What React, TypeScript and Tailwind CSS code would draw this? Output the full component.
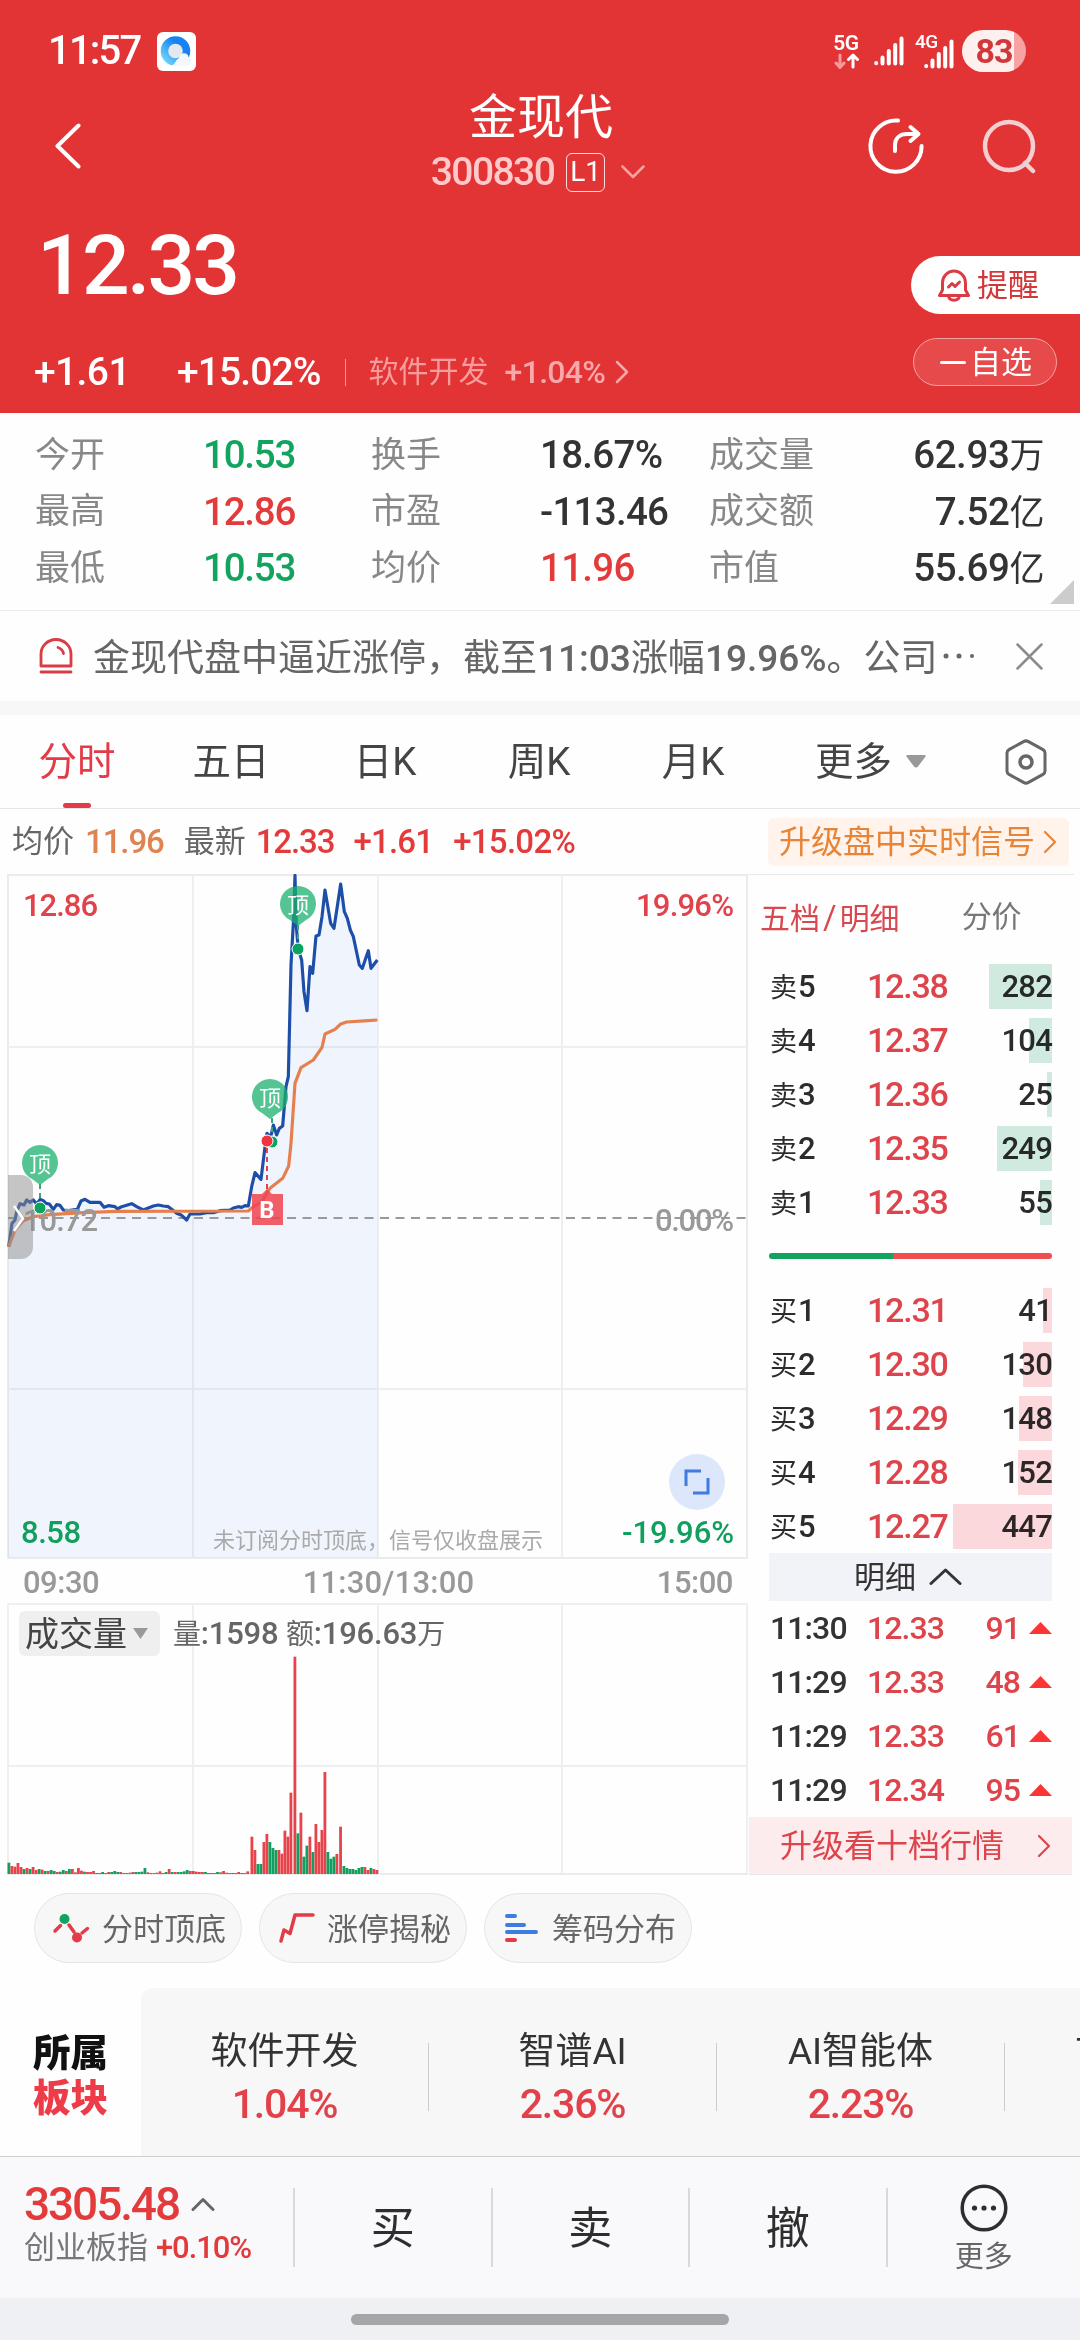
import type { ReactNode } from "react";

type Side = "up" | "down";

const stats = [
  [
    { label: "今开", value: "10.53", color: "text-[#12a35f]" },
    { label: "换手", value: "18.67%", color: "text-[#333]" },
    { label: "成交量", value: "62.93万", color: "text-[#333]" },
  ],
  [
    { label: "最高", value: "12.86", color: "text-[#e33b3b]" },
    { label: "市盈", value: "-113.46", color: "text-[#333]" },
    { label: "成交额", value: "7.52亿", color: "text-[#333]" },
  ],
  [
    { label: "最低", value: "10.53", color: "text-[#12a35f]" },
    { label: "均价", value: "11.96", color: "text-[#e33b3b]" },
    { label: "市值", value: "55.69亿", color: "text-[#333]" },
  ],
];

const sells = [
  { label: "卖5", price: "12.38", volume: 282, width: 63 },
  { label: "卖4", price: "12.37", volume: 104, width: 23 },
  { label: "卖3", price: "12.36", volume: 25, width: 5 },
  { label: "卖2", price: "12.35", volume: 249, width: 55 },
  { label: "卖1", price: "12.33", volume: 55, width: 12 },
];

const buys = [
  { label: "买1", price: "12.31", volume: 41, width: 9 },
  { label: "买2", price: "12.30", volume: 130, width: 29 },
  { label: "买3", price: "12.29", volume: 148, width: 33 },
  { label: "买4", price: "12.28", volume: 152, width: 34 },
  { label: "买5", price: "12.27", volume: 447, width: 99 },
];

const ticks = [
  { time: "11:30", price: "12.33", volume: 91 },
  { time: "11:29", price: "12.33", volume: 48 },
  { time: "11:29", price: "12.33", volume: 61 },
  { time: "11:29", price: "12.34", volume: 95 },
];

const sectors = [
  { name: "软件开发", change: "1.04%" },
  { name: "智谱AI", change: "2.36%" },
  { name: "AI智能体", change: "2.23%" },
];

// Chart series are kept at three units per pixel
const pricePoints =
  "26,1340 36,1270 45,1260 50,1235 60,1211 72,1215 80,1200 90,1207 100,1200 110,1212 121,1198 130,1202 138,1210 148,1212 160,1228 170,1214 180,1216 190,1230 205,1232 232,1228 243,1203 255,1198 270,1207 300,1207 312,1222 325,1217 345,1220 352,1227 365,1220 380,1216 395,1211 410,1220 430,1230 445,1224 460,1218 475,1215 490,1218 505,1220 515,1228 530,1240 545,1246 560,1260 570,1242 600,1242 620,1238 640,1238 660,1232 690,1230 700,1224 715,1220 725,1222 735,1217 745,1218 755,1160 765,1118 783,1138 795,1040 801,1000 812,1012 820,975 830,1005 838,985 848,978 858,860 865,830 873,495 880,370 885,226 889,380 895,448 905,480 912,575 921,632 930,500 938,520 948,408 957,405 966,350 975,270 992,370 1002,385 1022,252 1033,335 1042,355 1051,390 1060,410 1078,495 1087,505 1105,452 1113,505 1132,480";

const averagePoints =
  "26,1340 45,1290 70,1262 100,1250 150,1244 250,1238 350,1234 745,1233 765,1216 783,1208 810,1165 848,1135 866,1098 873,1030 885,850 903,803 940,780 966,742 975,702 1005,688 1022,672 1040,666 1105,662 1132,660";

const quietBars =
  "g34 r24 r22 r33 r21 g15 r18 g15 r21 r12 g15 r13 g9 r9 g12 g9 r6 g7 g12 r9 g15 r15 r5 r18 r10 g7 r6 r6 r9 g3 r3 g6 r3 r6 g6 g9 g6 r6 r3 r3 r4 r6 g6 g6 g7 g18 r5 r3 r3 r4 r8 g3 g6 r15 g6 r6 g6 g6 g8 g12 r9 r9 r7 r6 r6 g6 g3 r3 r3 g6 r5 r9 r4 r3 g3 r3 r6 g3 r3 r8";

const busyBars: [number, number, Side][] = [
  [756, 112, "up"], [765, 72, "up"], [774, 30, "down"], [783, 30, "down"], [792, 96, "up"],
  [801, 120, "up"], [810, 96, "down"], [819, 78, "down"], [828, 72, "down"], [837, 72, "up"],
  [846, 61, "up"], [855, 130, "up"], [864, 112, "up"], [873, 244, "up"], [885, 652, "up"],
  [894, 122, "down"], [903, 184, "up"], [912, 52, "down"], [921, 85, "down"], [930, 112, "up"],
  [939, 66, "down"], [948, 150, "up"], [957, 96, "up"], [966, 132, "up"], [975, 306, "up"],
  [984, 66, "down"], [993, 46, "down"], [1002, 52, "down"], [1011, 60, "up"], [1022, 142, "up"],
  [1032, 24, "down"], [1041, 18, "down"], [1050, 15, "down"], [1059, 15, "down"], [1068, 12, "down"],
  [1077, 18, "down"], [1086, 21, "down"], [1095, 21, "up"], [1104, 12, "up"], [1113, 18, "down"],
  [1122, 15, "up"], [1131, 12, "up"],
];

const volumeBars: [number, number, Side][] = [
  ...quietBars.split(" ").map((bar, i): [number, number, Side] => [
    27 + i * 9.07,
    Number(bar.slice(1)),
    bar[0] === "r" ? "up" : "down",
  ]),
  ...busyBars,
];

function Stroke({ w, h, d, color, width = 2.5 }: { w: number; h: number; d: string; color: string; width?: number }) {
  return (
    <svg width={w} height={h} viewBox={`0 0 ${w} ${h}`} fill="none" stroke={color} strokeWidth={width} strokeLinecap="round" strokeLinejoin="round" className="shrink-0">
      <path d={d} />
    </svg>
  );
}

function SignalBars({ className }: { className?: string }) {
  return (
    <svg width="30" height="30" viewBox="0 0 30 30" className={className} stroke="#fff" strokeWidth="4" strokeLinecap="round">
      <path d="M2.2 27v.3M8.5 21.5v6M14.8 15v12.5M21.2 9v18.5M27.5 2.500v25" />
    </svg>
  );
}

function StatusBar() {
  return (
    <div className="flex h-[92px] items-center pt-2.5 pl-12">
      <span className="w-[96px] text-[40px] font-medium leading-none tracking-[-1.8px]">11:57</span>
      <svg width="39" height="39" viewBox="0 0 39 39" className="ml-[13px]">
        <defs>
          <linearGradient id="ring" x1="1" y1="0" x2="0" y2="1">
            <stop offset="0.3" stopColor="#1583f2" />
            <stop offset="1" stopColor="#6fd6fb" />
          </linearGradient>
        </defs>
        <rect width="39" height="39" rx="6" fill="#fff" />
        <circle cx="18.500" cy="19" r="11" fill="#e3e8ee" stroke="url(#ring)" strokeWidth="7.500" />
        <path d="M14 34c4-1 4-6 8-8 1-6 9-6 9.500-1 4 .5 4 9-1 9z" fill="#f3f8fc" />
      </svg>
      <div className="flex flex-1 items-center justify-end pr-[54px]">
        <div className="flex w-[26px] flex-col items-center">
          <span className="text-[21px] font-semibold leading-[20px] tracking-[-0.5px]">5G</span>
          <svg width="25" height="16" viewBox="0 0 25 16" fill="none" strokeWidth="3" strokeLinecap="round" strokeLinejoin="round">
            <path d="M6 2v12M2 10l4 4.500 4-4.500" stroke="#f59a9a" />
            <path d="M19 14V2M14.500 6.500L19 2l4.500 4.500" stroke="#fff" />
          </svg>
        </div>
        <SignalBars className="ml-[15px]" />
        <div className="relative ml-[11px] h-[38px] w-[40px]">
          <span className="absolute left-0 top-0 text-[19px] font-medium leading-[19px] tracking-[-0.5px]">4G</span>
          <SignalBars className="mt-[7px] ml-[9px]" />
        </div>
        <div className="ml-[7px] flex h-[42px] w-[64px] items-center justify-center rounded-full bg-linear-to-r from-[#fff0f0] from-82% to-[#f7a3a4] to-82%">
          <span className="text-[34px] font-bold leading-none tracking-[-1px] text-[#d2373a]">83</span>
        </div>
      </div>
    </div>
  );
}

function Header() {
  return (
    <header className="h-[413px] bg-[#e33435] text-white">
      <StatusBar />
      <div className="grid h-[108px] grid-cols-3 items-center">
        <div className="pl-[54px]">
          <Stroke w={27} h={46} d="M24.500 2.500L3.500 23l21 20.500" color="#fff" width={4} />
        </div>
        <div className="h-full">
          <h1 className="flex h-12 items-center justify-center pl-0.5 pt-[3px] text-[48px] leading-none">金现代</h1>
          <div className="flex h-[60px] items-center justify-center pt-1 pr-1">
            <span className="text-[39px] font-medium leading-none tracking-[-1.6px] text-[#ffc8c9]">300830</span>
            <span className="ml-3 flex h-[39px] w-[39px] items-center justify-center rounded-md border border-[#ffdcdc] text-[28px] leading-none">L1</span>
            <span className="ml-4">
              <Stroke w={24} h={14} d="M1.500 1.500L12 12 22.500 1.500" color="#f8a3a4" />
            </span>
          </div>
        </div>
        <div className="flex items-center justify-end gap-14 pr-[43px]">
          <svg width="58" height="58" viewBox="0 0 58 58" fill="none" stroke="#fff" strokeWidth="4" strokeLinecap="round" strokeLinejoin="round">
            <path d="M31 3.600A25.600 25.600 0 1 0 54.600 29" />
            <path d="M28 34v-6c0-7 5-11 12-11h10M43.500 10l8 7-8 7" />
          </svg>
          <svg width="56" height="56" viewBox="0 0 56 56" fill="none" stroke="#f4cfd2" strokeWidth="4.500" strokeLinecap="round">
            <circle cx="28" cy="28" r="24" />
            <path d="M44 45l8 8" />
          </svg>
        </div>
      </div>
      <div className="flex justify-between">
        <div>
          <div className="flex h-[130px] items-center pl-[37px] pt-0.5 text-[84px] font-medium leading-none tracking-[-2.800px]">12.33</div>
          <div className="flex h-[83px] items-center pl-[34px] pt-px text-[39px] font-medium leading-none">
            <span className="tracking-[-0.600px]">+1.61</span>
            <span className="ml-[47px] tracking-[-0.900px]">+15.02%</span>
            <span className="ml-6 h-[27px] w-px bg-[#f09a9b]" />
            <span className="ml-[23px] text-[30px] font-normal text-[#f79c9d]">软件开发</span>
            <span className="ml-4 text-[32px] tracking-[-0.700px] text-[#f9a9aa]">+1.04%</span>
            <span className="ml-2.5">
              <Stroke w={14} h={24} d="M2 2l10 10L2 22" color="#f9a9aa" />
            </span>
          </div>
        </div>
        <div className="flex flex-col pt-14">
          <button className="flex h-[58px] w-[169px] items-center rounded-l-full bg-white pl-[27px] text-[31px] leading-none text-[#d2373a]">
            <svg width="32" height="34" viewBox="0 0 32 34" fill="none" stroke="#d93c45" strokeWidth="3" strokeLinejoin="round" strokeLinecap="round">
              <path d="M4.500 22V15a11.500 12 0 0 1 23 0v7l3 5.500H1.500z" />
              <path d="M10.500 28c1 5.500 10 5.500 11 0M10.500 19l3.500-3.500 3 3 4.500-4.500" />
            </svg>
            <span className="ml-[7px]">提醒</span>
          </button>
          <button className="mt-6 ml-0.5 flex h-[48px] w-[144px] items-center rounded-full border border-[#f3a2a3] bg-[#e74a4b] pl-[26px] text-[31px] leading-none">
            <span className="h-[3px] w-[26px] rounded-full bg-white" />
            <span className="ml-1">自选</span>
          </button>
        </div>
      </div>
    </header>
  );
}

function Stats() {
  return (
    <section className="relative h-[198px] border-b border-[#ebebeb] pt-[14px]">
      {stats.map(([a, b, c]) => (
        <div key={a.label} className="flex h-[56.500px] items-center pl-[35px] pr-[36px] text-[35px] leading-none text-[#888]">
          <span className="w-[168px]">{a.label}</span>
          <span className={`w-[168px] text-[38.500px] font-medium tracking-[-1.200px] ${a.color}`}>{a.value}</span>
          <span className="w-[169px]">{b.label}</span>
          <span className={`w-[169px] text-[38.500px] font-medium tracking-[-0.700px] ${b.color}`}>{b.value}</span>
          <span>{c.label}</span>
          <span className={`ml-auto text-[38.500px] font-medium leading-none tracking-[-0.400px] ${c.color}`}>
            {c.value.slice(0, -1)}
            <span className="text-[35px] font-normal">{c.value.slice(-1)}</span>
          </span>
        </div>
      ))}
      <svg width="24" height="24" viewBox="0 0 24 24" className="absolute bottom-[6px] right-1.5" fill="#ccc">
        <path d="M24 0v24H0z" />
      </svg>
    </section>
  );
}

function Notice() {
  return (
    <section className="flex h-[90px] items-center pl-[39px] text-[#666]">
      <svg width="34" height="36" viewBox="0 0 34 36" fill="none" stroke="#d93c45" strokeWidth="2.800" strokeLinecap="round" strokeLinejoin="round">
        <path d="M2 28V16a15 14.500 0 0 1 30 0v12zM2 34h30M19 9.500c3 1 5 3 5.500 6" />
      </svg>
      <span className="ml-5 whitespace-nowrap pt-[5px] text-[37px] leading-none">
        金现代盘中逼近涨停，截至<span className="font-medium">11:03</span>涨幅<span className="font-medium">19.96%</span>。公司
      </span>
      <svg width="32" height="8" viewBox="0 0 32 8" fill="#666" className="ml-1">
        <circle cx="4" cy="4" r="2.500" />
        <circle cx="17" cy="4" r="2.500" />
        <circle cx="30" cy="4" r="2" />
      </svg>
      <span className="ml-auto pr-[37px]">
        <Stroke w={27} h={27} d="M1.500 1.500l24 24M25.500 1.500l-24 24" color="#8c8c8c" />
      </span>
    </section>
  );
}

function PeriodTabs() {
  return (
    <nav className="flex h-[94px] items-center border-b border-[#e6e6e6] text-[38.500px] leading-none text-[#444]">
      <div className="relative flex h-full w-[154px] items-center justify-center pt-0.5 text-[#e33b47]">
        分时
        <span className="absolute bottom-0 left-[63px] h-[5px] w-7 rounded-full bg-[#e33b47]" />
      </div>
      <span className="w-[154px] pt-0.5 text-center">五日</span>
      <span className="w-[154px] pt-0.5 text-center">日K</span>
      <span className="w-[154px] pt-0.5 text-center">周K</span>
      <span className="w-[154px] pt-0.5 text-center">月K</span>
      <span className="ml-[45px] pt-0.5">更多</span>
      <svg width="20" height="13" viewBox="0 0 20 13" fill="#999" className="ml-[14px]">
        <path d="M1.500 0h17q2 0 .7 2L12 11.500q-2 1.800-4 0L.8 2Q-.5 0 1.500 0z" />
      </svg>
      <svg width="42" height="46" viewBox="0 0 42 46" fill="none" stroke="#666" strokeWidth="3" strokeLinejoin="round" className="ml-auto mr-[33px]">
        <path d="M18.500 2.600a5 5 0 0 1 5 0l14.500 8a4 4 0 0 1 2 3.500v17.800a4 4 0 0 1-2 3.500l-14.500 8a5 5 0 0 1-5 0L4 35.400a4 4 0 0 1-2-3.500V14.100a4 4 0 0 1 2-3.500z" />
        <circle cx="21" cy="23" r="6" strokeWidth="3.500" />
      </svg>
    </nav>
  );
}

function QuoteLine() {
  return (
    <div className="flex h-[65px] items-center pl-3 text-[31px] leading-none text-[#666]">
      <span>均价</span>
      <span className="ml-[11px] text-[33px] font-medium tracking-[-1.100px] text-[#df8450]">11.96</span>
      <span className="ml-[20px]">最新</span>
      <span className="ml-[10px] text-[33px] font-medium tracking-[-1.100px] text-[#e33b3b]">12.33</span>
      <span className="ml-[19px] text-[33px] font-medium tracking-[-0.800px] text-[#e33b3b]">+1.61</span>
      <span className="ml-[20px] text-[33px] font-medium tracking-[-0.700px] text-[#e33b3b]">+15.02%</span>
      <button className="ml-auto mr-[11px] flex h-12 w-[301px] items-center rounded-md bg-[#fff3ec] pl-[11px] text-[32px] leading-none text-[#e88436]">
        升级盘中实时信号
        <span className="ml-2">
          <Stroke w={14} h={24} d="M2 2l10 10L2 22" color="#e88436" width={2.200} />
        </span>
      </button>
    </div>
  );
}

function TopPin({ x, y, dotX, dotY }: { x: number; y: number; dotX: number; dotY: number }) {
  return (
    <g>
      <path d={`M${dotX} ${y + 20}V${dotY - 4}`} stroke="#3ba676" strokeWidth="2" strokeDasharray="5 4" />
      <path d={`M${x - 8} ${y + 15}A18 18 0 1 1 ${x + 8} ${y + 15}L${x} ${y + 21}z`} fill="#1bb06e" fillOpacity="0.75" />
      <text x={x} y={y + 8} textAnchor="middle" fontSize="22" fill="#fff">顶</text>
      <circle cx={dotX} cy={dotY} r="6" fill="#0ba361" stroke="#fff" />
    </g>
  );
}

function PriceChart() {
  return (
    <svg width="748" height="688" viewBox="0 874 748 688" className="block">
      <rect x="8" y="875" width="739" height="683" fill="#fefefe" stroke="#ebebeb" strokeWidth="2" />
      <path d="M193 875v683M378 875v683M562 875v683M8 1047h739M8 1389h739" stroke="#efefef" strokeWidth="2" />
      <g transform="translate(0 800) scale(0.33333)">
        <polygon points={`24,2272 ${pricePoints} 1134,2272`} fill="#4a80ee" fillOpacity="0.08" />
      </g>
      <path d="M8 1218h739" stroke="#999" strokeWidth="2" strokeDasharray="9 6.500" />
      <g transform="translate(0 800) scale(0.33333)" fill="none" strokeLinejoin="round" strokeWidth="9.500">
        <polyline points={pricePoints} stroke="#1d4fa8" />
        <polyline points={averagePoints} stroke="#e5804e" />
      </g>

      <g fontSize="31" fontWeight="500">
        <text x="23" y="916" fill="#e0434c" textLength="75">12.86</text>
        <text x="21" y="1543" fill="#129f5d" textLength="60">8.58</text>
        <text x="23" y="1231" fill="#999" textLength="75">10.72</text>
        <text x="734" y="916" textAnchor="end" fill="#e0434c" textLength="98">19.96%</text>
        <text x="734" y="1231" textAnchor="end" fill="#999" textLength="79">0.00%</text>
        <text x="734" y="1543" textAnchor="end" fill="#129f5d" textLength="112">-19.96%</text>
      </g>
      <text x="213" y="1548" fontSize="22" fill="#aaa">未订阅分时顶底，信号仅收盘展示</text>

      <TopPin x={40} y={1164} dotX={40} dotY={1208} />
      <TopPin x={270} y={1098} dotX={272} dotY={1142} />
      <TopPin x={298} y={905} dotX={298} dotY={949} />
      <path d="M267 1148v42" stroke="#e0434c" strokeWidth="2" strokeDasharray="5 4" />
      <circle cx="267" cy="1141" r="6" fill="#f0343f" stroke="#fff" />
      <path d="M252 1194h10l5-5 5 5h11v31h-31z" fill="#f0434f" fillOpacity="0.85" />
      <text x="267" y="1218" textAnchor="middle" fontSize="24" fontWeight="700" fill="#fff">B</text>

      {/* drawer handle */}
      <path d="M8 1175h13a12 12 0 0 1 12 12v60a12 12 0 0 1-12 12H8z" fill="#8c8c8c" fillOpacity="0.5" />
      <path d="M14 1206l9 12.500-9 12.500" fill="none" stroke="#fff" strokeWidth="2.500" />

      <circle cx="697" cy="1482" r="28" fill="#dde7fb" />
      <path d="M701 1471h-15v15M693 1493h15v-15" fill="none" stroke="#3f7be0" strokeWidth="3" />
    </svg>
  );
}

function VolumeChart() {
  return (
    <div className="relative h-[272px]">
      <svg width="748" height="272" viewBox="0 1603 748 272" className="block">
        <rect x="8" y="1604" width="739" height="270" fill="#fefefe" stroke="#efefef" strokeWidth="2" />
        <path d="M193 1604v270M378 1604v270M562 1604v270M8 1766h739" stroke="#efefef" strokeWidth="2" />
        <path d="M8 1874h740" stroke="#e8e8e8" />
        {volumeBars.map(([x, h, side]) => (
          <rect key={x} x={x / 3 - 1.500} y={1874 - h / 3} width="2.800" height={h / 3} fill={side === "up" ? "#e6434b" : "#129f5d"} />
        ))}
      </svg>
      <div className="absolute left-[19px] top-2 flex items-center leading-none text-[#666]">
        <button className="flex h-[45px] w-[141px] items-center rounded-md bg-[#efefef] pl-[6px] text-[34px] leading-none text-[#444]">
          成交量
          <svg width="15" height="11" viewBox="0 0 15 11" fill="#999" className="ml-[6px]">
            <path d="M0 0h15L7.500 11z" />
          </svg>
        </button>
        <span className="ml-[13px] whitespace-pre text-[31px] font-medium tracking-[-0.200px]">
          <span className="text-[28px] font-normal">量</span>:1598 <span className="text-[28px] font-normal">额</span>:196.63<span className="text-[28px] font-normal">万</span>
        </span>
      </div>
    </div>
  );
}

function DepthRow({ label, price, volume, width, side }: { label: string; price: string; volume: number; width: number; side: Side }) {
  return (
    <div className="relative flex h-[54px] items-center text-[31px] leading-none text-[#2c2c2c]">
      <span className="w-[98px] pl-px">
        <span className="text-[27px]">{label[0]}</span>
        <span className="ml-px font-medium">{label[1]}</span>
      </span>
      <span className="text-[34px] font-medium tracking-[-1.200px] text-[#de444b]">{price}</span>
      <span className="ml-auto font-medium tracking-[-0.800px]">{volume}</span>
      <span
        className={`absolute right-0 top-[4.500px] h-[45px] mix-blend-multiply ${side === "down" ? "bg-[#d2ebe0]" : "bg-[#fbd9dc]"}`}
        style={{ width }}
      />
    </div>
  );
}

function OrderBook() {
  return (
    <aside className="flex w-[326px] flex-col border-t border-[#e8e8e8]">
      <div className="flex h-[85px] items-center pl-3 text-[30px] leading-none">
        <span className="text-[#d9484f]">五档<span className="mx-[3px] text-[33px]">/</span>明细</span>
        <span className="ml-[62px] text-[#777]">分价</span>
      </div>
      <div className="pl-[21px] pr-[22px]">
        {sells.map((row) => (
          <DepthRow key={row.label} {...row} side="down" />
        ))}
        <div className="flex h-[54px] items-center">
          <span className="h-[6px] w-[124px] rounded-l-full bg-[#12a35f]" />
          <span className="h-[6px] flex-1 rounded-r-full bg-[#ee4e4f]" />
        </div>
        {buys.map((row) => (
          <DepthRow key={row.label} {...row} side="up" />
        ))}
        <div className="flex h-12 items-center justify-center bg-[#f2f3f9] pr-[5px] text-[31px] leading-none text-[#333]">
          明细
          <span className="ml-[13px]">
            <Stroke w={33} h={18} d="M2 15.500L16.500 2 31 15.500" color="#333" width={3} />
          </span>
        </div>
        {ticks.map((tick, i) => (
          <div key={i} className="flex h-[54px] items-center text-[32px] font-medium leading-none tracking-[-0.900px]">
            <span className="w-[98px] pl-px text-[#333]">{tick.time}</span>
            <span className="text-[#de444b]">{tick.price}</span>
            <span className="ml-auto text-[#de444b]">{tick.volume}</span>
            <svg width="23" height="12" viewBox="0 0 23 12" fill="#fb3434" className="ml-[9px]">
              <path d="M11.500 0L23 12H0z" />
            </svg>
          </div>
        ))}
      </div>
      <div className="mt-auto mr-0.5 ml-px flex h-[58px] items-center border-b border-[#e8e8e8] bg-[#fdecee] pl-[31px] text-[32px] leading-none text-[#de444b]">
        升级看十档行情
        <span className="ml-auto mr-[21px]">
          <Stroke w={14} h={24} d="M2 2l10 10L2 22" color="#de444b" width={2.200} />
        </span>
      </div>
    </aside>
  );
}

function Pill({ icon, children }: { icon: ReactNode; children: ReactNode }) {
  return (
    <button className="flex h-[70px] w-[208px] items-center rounded-full border border-[#e5e5e5] bg-[#f7f7f7] pl-[17px] text-[31px] leading-none text-[#666]">
      {icon}
      <span className="ml-3 pt-0.5">{children}</span>
    </button>
  );
}

function Tools() {
  return (
    <section className="flex h-[113px] gap-[17px] pt-[18px] pl-[34px]">
      <Pill
        icon={
          <svg width="38" height="32" viewBox="0 0 38 32" fill="none" stroke="#e33b47" strokeWidth="3.500" strokeLinecap="round">
            <path d="M3 19l5.500-5.500M17 13l5 7M30 21l5.500-4.500" />
            <circle cx="12.500" cy="7" r="5" fill="#12a35f" stroke="none" />
            <circle cx="25" cy="25.500" r="5" fill="#e33b47" stroke="none" />
          </svg>
        }
      >
        分时顶底
      </Pill>
      <Pill icon={<Stroke w={38} h={32} d="M4 29l3-11 6 3.500L18 3h18" color="#e33b47" width={3.500} />}>涨停揭秘</Pill>
      <Pill
        icon={
          <svg width="38" height="32" viewBox="0 0 38 32" strokeWidth="4" strokeLinecap="round">
            <path d="M5 4h8M5 13h17M5 20h29" stroke="#3f7be0" />
            <path d="M5 28h8" stroke="#e33b47" />
          </svg>
        }
      >
        筹码分布
      </Pill>
    </section>
  );
}

function Sectors() {
  return (
    <section className="flex h-[168px] overflow-hidden">
      <div className="flex w-[141px] shrink-0 flex-col pt-[43px] pl-[33px] text-[37.500px] font-black leading-[45px]">
        <span className="text-[#111]">所属</span>
        <span className="text-[#ed3b47]">板块</span>
      </div>
      <div className="flex flex-1 items-center overflow-hidden rounded-tl-xl bg-[#f7f7f7]">
        {sectors.map((sector) => (
          <div key={sector.name} className="flex h-full w-[288px] shrink-0 items-center justify-between">
            <div className="flex flex-1 flex-col items-center pt-3">
              <span className="text-[37px] leading-[54px] text-[#333]">{sector.name}</span>
              <span className="-mt-0.5 text-[41px] font-medium leading-[54px] tracking-[-1.200px] text-[#e2414a]">{sector.change}</span>
            </div>
            <span className="mt-2.5 h-[68px] w-px bg-[#ccc]" />
          </div>
        ))}
        <span className="mb-10 shrink-0 pl-[71px] text-[37px] leading-[54px] text-[#333]">T</span>
      </div>
    </section>
  );
}

function TradeBar() {
  return (
    <footer className="flex h-[142px] items-center border-t border-[#d0d0d0] bg-[#f9f9fc] text-[44px] leading-none text-[#2e2e2e]">
      <div className="flex h-full w-[293px] shrink-0 flex-col pt-[23px] pl-6">
        <div className="flex items-center text-[46px] font-medium leading-[48px] tracking-[-2.100px] text-[#e33b3b]">
          3305.48
          <span className="ml-3">
            <Stroke w={24} h={15} d="M2 12.500L12 2.500l10 10" color="#666" width={3} />
          </span>
        </div>
        <div className="flex items-center pt-px text-[31px] leading-[38px] text-[#777]">
          创业板指
          <span className="ml-2 font-medium tracking-[-1.100px] text-[#e33b3b]">+0.10%</span>
        </div>
      </div>
      {["买", "卖", "撤"].map((label) => (
        <div key={label} className="flex w-[197.500px] items-center">
          <span className="h-[79px] w-0.5 bg-[#d9d9dd]" />
          <span className="flex-1 pt-0.5 text-center">{label}</span>
        </div>
      ))}
      <div className="flex flex-1 items-center">
        <span className="h-[79px] w-0.5 bg-[#d9d9dd]" />
        <div className="flex flex-1 flex-col items-center gap-[11px] text-[29px] text-[#666]">
          <svg width="48" height="48" viewBox="0 0 48 48" fill="none" stroke="#2e2e2e" strokeWidth="3.500">
            <circle cx="24" cy="24" r="21.800" />
            <g fill="#2e2e2e" stroke="none">
              <circle cx="14.500" cy="24" r="2.600" />
              <circle cx="24" cy="24" r="2.600" />
              <circle cx="33.500" cy="24" r="2.600" />
            </g>
          </svg>
          <span>更多</span>
        </div>
      </div>
    </footer>
  );
}

export default function App() {
  return (
    <div className="flex h-[2340px] w-[1080px] flex-col overflow-hidden bg-[#fefefe] font-[Roboto,'Noto_Sans_CJK_SC',sans-serif]">
      <Header />
      <Stats />
      <Notice />
      <div className="h-[14px] shrink-0 bg-[#f7f7f7]" />
      <PeriodTabs />
      <QuoteLine />
      <div className="flex h-[1001px]">
        <div className="w-[748px]">
          <PriceChart />
          <div className="flex h-[41px] items-center justify-between pr-[15px] pl-[23px] text-[31px] font-medium leading-none tracking-[-0.500px] text-[#999]">
            <span>09:30</span>
            <span className="ml-[21px] tracking-[0.200px]">11:30/13:00</span>
            <span>15:00</span>
          </div>
          <VolumeChart />
        </div>
        <OrderBook />
      </div>
      <Tools />
      <Sectors />
      <TradeBar />
      <div className="flex h-[42px] justify-center bg-[#eff0f3] pt-4">
        <span className="h-[11px] w-[378px] rounded-full bg-[#a5a6a7]" />
      </div>
    </div>
  );
}
